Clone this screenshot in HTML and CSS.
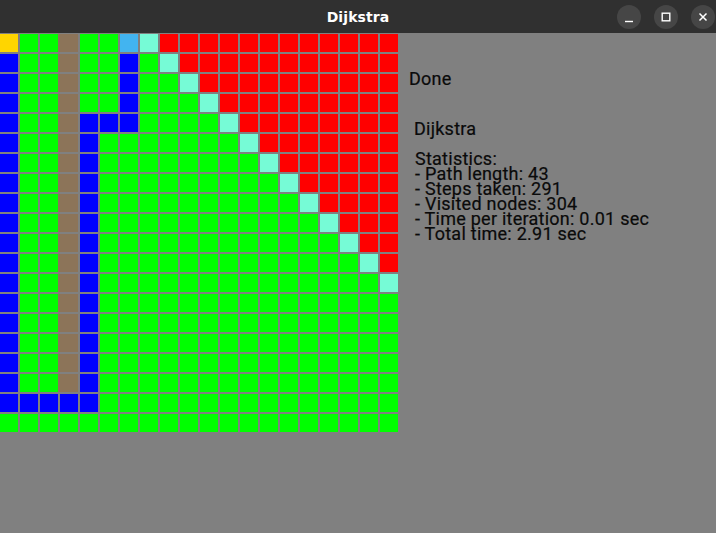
FILE: index.html
```html
<!DOCTYPE html>
<html>
<head>
<meta charset="utf-8">
<title>Dijkstra</title>
<link rel="stylesheet" href="styles.css">
</head>
<body>
<div class="window">
  <header class="titlebar">
    <div class="title">Dijkstra</div>
    <div class="controls">
      <span class="btn"><svg width="24" height="24" viewBox="0 0 24 24"><path d="M8 16.5h8" stroke="#fff" stroke-width="1.4"/></svg></span>
      <span class="btn"><svg width="24" height="24" viewBox="0 0 24 24"><rect x="8.2" y="8.2" width="7.6" height="7.6" fill="none" stroke="#fff" stroke-width="1.4"/></svg></span>
      <span class="btn"><svg width="24" height="24" viewBox="0 0 24 24"><path d="M8.5 8.5l7 7M15.5 8.5l-7 7" stroke="#fff" stroke-width="1.5"/></svg></span>
    </div>
  </header>
  <main class="content">
    <div class="grid">
      <i class="y"></i><i class="g"></i><i class="g"></i><i class="w"></i><i class="g"></i><i class="g"></i><i class="l"></i><i class="a"></i><i class="r"></i><i class="r"></i><i class="r"></i><i class="r"></i><i class="r"></i><i class="r"></i><i class="r"></i><i class="r"></i><i class="r"></i><i class="r"></i><i class="r"></i><i class="r"></i>
      <i class="b"></i><i class="g"></i><i class="g"></i><i class="w"></i><i class="g"></i><i class="g"></i><i class="b"></i><i class="g"></i><i class="a"></i><i class="r"></i><i class="r"></i><i class="r"></i><i class="r"></i><i class="r"></i><i class="r"></i><i class="r"></i><i class="r"></i><i class="r"></i><i class="r"></i><i class="r"></i>
      <i class="b"></i><i class="g"></i><i class="g"></i><i class="w"></i><i class="g"></i><i class="g"></i><i class="b"></i><i class="g"></i><i class="g"></i><i class="a"></i><i class="r"></i><i class="r"></i><i class="r"></i><i class="r"></i><i class="r"></i><i class="r"></i><i class="r"></i><i class="r"></i><i class="r"></i><i class="r"></i>
      <i class="b"></i><i class="g"></i><i class="g"></i><i class="w"></i><i class="g"></i><i class="g"></i><i class="b"></i><i class="g"></i><i class="g"></i><i class="g"></i><i class="a"></i><i class="r"></i><i class="r"></i><i class="r"></i><i class="r"></i><i class="r"></i><i class="r"></i><i class="r"></i><i class="r"></i><i class="r"></i>
      <i class="b"></i><i class="g"></i><i class="g"></i><i class="w"></i><i class="b"></i><i class="b"></i><i class="b"></i><i class="g"></i><i class="g"></i><i class="g"></i><i class="g"></i><i class="a"></i><i class="r"></i><i class="r"></i><i class="r"></i><i class="r"></i><i class="r"></i><i class="r"></i><i class="r"></i><i class="r"></i>
      <i class="b"></i><i class="g"></i><i class="g"></i><i class="w"></i><i class="b"></i><i class="g"></i><i class="g"></i><i class="g"></i><i class="g"></i><i class="g"></i><i class="g"></i><i class="g"></i><i class="a"></i><i class="r"></i><i class="r"></i><i class="r"></i><i class="r"></i><i class="r"></i><i class="r"></i><i class="r"></i>
      <i class="b"></i><i class="g"></i><i class="g"></i><i class="w"></i><i class="b"></i><i class="g"></i><i class="g"></i><i class="g"></i><i class="g"></i><i class="g"></i><i class="g"></i><i class="g"></i><i class="g"></i><i class="a"></i><i class="r"></i><i class="r"></i><i class="r"></i><i class="r"></i><i class="r"></i><i class="r"></i>
      <i class="b"></i><i class="g"></i><i class="g"></i><i class="w"></i><i class="b"></i><i class="g"></i><i class="g"></i><i class="g"></i><i class="g"></i><i class="g"></i><i class="g"></i><i class="g"></i><i class="g"></i><i class="g"></i><i class="a"></i><i class="r"></i><i class="r"></i><i class="r"></i><i class="r"></i><i class="r"></i>
      <i class="b"></i><i class="g"></i><i class="g"></i><i class="w"></i><i class="b"></i><i class="g"></i><i class="g"></i><i class="g"></i><i class="g"></i><i class="g"></i><i class="g"></i><i class="g"></i><i class="g"></i><i class="g"></i><i class="g"></i><i class="a"></i><i class="r"></i><i class="r"></i><i class="r"></i><i class="r"></i>
      <i class="b"></i><i class="g"></i><i class="g"></i><i class="w"></i><i class="b"></i><i class="g"></i><i class="g"></i><i class="g"></i><i class="g"></i><i class="g"></i><i class="g"></i><i class="g"></i><i class="g"></i><i class="g"></i><i class="g"></i><i class="g"></i><i class="a"></i><i class="r"></i><i class="r"></i><i class="r"></i>
      <i class="b"></i><i class="g"></i><i class="g"></i><i class="w"></i><i class="b"></i><i class="g"></i><i class="g"></i><i class="g"></i><i class="g"></i><i class="g"></i><i class="g"></i><i class="g"></i><i class="g"></i><i class="g"></i><i class="g"></i><i class="g"></i><i class="g"></i><i class="a"></i><i class="r"></i><i class="r"></i>
      <i class="b"></i><i class="g"></i><i class="g"></i><i class="w"></i><i class="b"></i><i class="g"></i><i class="g"></i><i class="g"></i><i class="g"></i><i class="g"></i><i class="g"></i><i class="g"></i><i class="g"></i><i class="g"></i><i class="g"></i><i class="g"></i><i class="g"></i><i class="g"></i><i class="a"></i><i class="r"></i>
      <i class="b"></i><i class="g"></i><i class="g"></i><i class="w"></i><i class="b"></i><i class="g"></i><i class="g"></i><i class="g"></i><i class="g"></i><i class="g"></i><i class="g"></i><i class="g"></i><i class="g"></i><i class="g"></i><i class="g"></i><i class="g"></i><i class="g"></i><i class="g"></i><i class="g"></i><i class="a"></i>
      <i class="b"></i><i class="g"></i><i class="g"></i><i class="w"></i><i class="b"></i><i class="g"></i><i class="g"></i><i class="g"></i><i class="g"></i><i class="g"></i><i class="g"></i><i class="g"></i><i class="g"></i><i class="g"></i><i class="g"></i><i class="g"></i><i class="g"></i><i class="g"></i><i class="g"></i><i class="g"></i>
      <i class="b"></i><i class="g"></i><i class="g"></i><i class="w"></i><i class="b"></i><i class="g"></i><i class="g"></i><i class="g"></i><i class="g"></i><i class="g"></i><i class="g"></i><i class="g"></i><i class="g"></i><i class="g"></i><i class="g"></i><i class="g"></i><i class="g"></i><i class="g"></i><i class="g"></i><i class="g"></i>
      <i class="b"></i><i class="g"></i><i class="g"></i><i class="w"></i><i class="b"></i><i class="g"></i><i class="g"></i><i class="g"></i><i class="g"></i><i class="g"></i><i class="g"></i><i class="g"></i><i class="g"></i><i class="g"></i><i class="g"></i><i class="g"></i><i class="g"></i><i class="g"></i><i class="g"></i><i class="g"></i>
      <i class="b"></i><i class="g"></i><i class="g"></i><i class="w"></i><i class="b"></i><i class="g"></i><i class="g"></i><i class="g"></i><i class="g"></i><i class="g"></i><i class="g"></i><i class="g"></i><i class="g"></i><i class="g"></i><i class="g"></i><i class="g"></i><i class="g"></i><i class="g"></i><i class="g"></i><i class="g"></i>
      <i class="b"></i><i class="g"></i><i class="g"></i><i class="w"></i><i class="b"></i><i class="g"></i><i class="g"></i><i class="g"></i><i class="g"></i><i class="g"></i><i class="g"></i><i class="g"></i><i class="g"></i><i class="g"></i><i class="g"></i><i class="g"></i><i class="g"></i><i class="g"></i><i class="g"></i><i class="g"></i>
      <i class="b"></i><i class="b"></i><i class="b"></i><i class="b"></i><i class="b"></i><i class="g"></i><i class="g"></i><i class="g"></i><i class="g"></i><i class="g"></i><i class="g"></i><i class="g"></i><i class="g"></i><i class="g"></i><i class="g"></i><i class="g"></i><i class="g"></i><i class="g"></i><i class="g"></i><i class="g"></i>
      <i class="g"></i><i class="g"></i><i class="g"></i><i class="g"></i><i class="g"></i><i class="g"></i><i class="g"></i><i class="g"></i><i class="g"></i><i class="g"></i><i class="g"></i><i class="g"></i><i class="g"></i><i class="g"></i><i class="g"></i><i class="g"></i><i class="g"></i><i class="g"></i><i class="g"></i><i class="g"></i>
    </div>
    <section class="panel">
      <div class="status">Done</div>
      <div class="algo">Dijkstra</div>
      <div class="stats">
        <div>Statistics:</div>
        <div>- Path length: 43</div>
        <div>- Steps taken: 291</div>
        <div>- Visited nodes: 304</div>
        <div>- Time per iteration: 0.01 sec</div>
        <div>- Total time: 2.91 sec</div>
      </div>
    </section>
  </main>
</div>
</body>
</html>
```
FILE: styles.css
```css
html, body {
  margin: 0;
  padding: 0;
  background: #808080;
}
.window {
  width: 716px;
  height: 533px;
  display: flex;
  flex-direction: column;
  background: #808080;
  overflow: hidden;
}
.titlebar {
  height: 33px;
  flex: 0 0 33px;
  background: #303030;
  position: relative;
  display: flex;
  align-items: center;
  justify-content: center;
}
.title {
  color: #ffffff;
  font-family: "DejaVu Sans", sans-serif;
  font-weight: bold;
  font-size: 14px;
  letter-spacing: 0.1px;
}
.controls {
  position: absolute;
  right: 1px;
  top: 5px;
  display: flex;
  gap: 13px;
}
.btn {
  width: 24px;
  height: 24px;
  border-radius: 50%;
  background: #464646;
  display: block;
}
.btn svg {
  display: block;
}
.content {
  display: flex;
  padding-top: 1px;
}
.grid {
  display: grid;
  grid-template-columns: repeat(20, 18px);
  grid-auto-rows: 18px;
  gap: 2px;
  width: 400px;
  flex: 0 0 400px;
}
.grid i {
  display: block;
}
.g { background: #00ff00; }
.b { background: #0000ff; }
.r { background: #ff0000; }
.a { background: #76fbd6; }
.y { background: #ffd500; }
.l { background: #42b4f0; }
.w { background: #8c7459; margin-left: -2px; }
.panel {
  font-family: Roboto, "Noto Sans", sans-serif;
  font-size: 18px;
  line-height: 15px;
  letter-spacing: 0.25px;
  color: #0a0a0a;
  padding-top: 37px;
  -webkit-text-stroke: 0.2px #0a0a0a;
}
.status {
  margin-left: 9px;
}
.algo {
  margin-left: 14px;
  margin-top: 35px;
}
.stats {
  margin-left: 15px;
  margin-top: 15px;
}
```
